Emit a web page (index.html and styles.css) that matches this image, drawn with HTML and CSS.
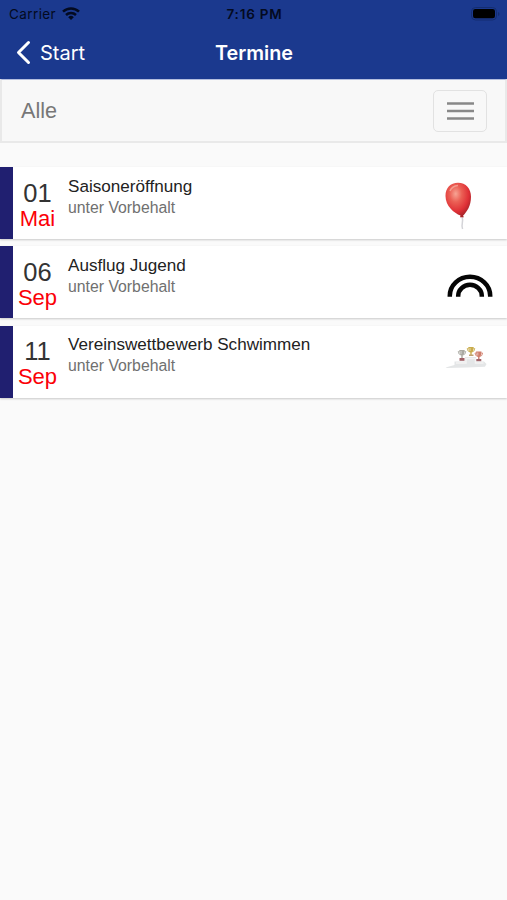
FILE: index.html
```html
<!DOCTYPE html>
<html lang="de">
<head>
    <meta charset="UTF-8">
    <meta name="viewport" content="width=device-width, initial-scale=1.0">
    <title>Termine</title>
    <link rel="stylesheet" href="styles.css">
</head>
<body>

<header>
    <div class="status-bar">
        <div class="carrier">
            <span>Carrier</span>
            <svg width="18" height="14" viewBox="0 0 18 14" fill="none" stroke="#030a20" stroke-width="2.5">
                <path d="M1 4.700a11.500 11.500 0 0 1 16 0"/>
                <path d="M4 8a7.300 7.300 0 0 1 10 0"/>
                <path d="M6.200 10.200a4 4 0 0 1 5.600 0L9 13z" fill="#030a20" stroke="none"/>
            </svg>
        </div>
        <span class="time">7:16 PM</span>
        <svg class="battery" width="29" height="14" viewBox="0 0 29 14">
            <rect x="0.5" y="0.5" width="25" height="12.5" rx="4" fill="none" stroke="#142d70"/>
            <rect x="2" y="2" width="22" height="9.3" rx="2.3" fill="#000"/>
            <path d="M27 5v4q1.500-.5 1.500-2T27 5z" fill="#142d70"/>
        </svg>
    </div>
    <nav class="nav-bar">
        <a class="back">
            <svg width="16" height="26" viewBox="0 0 16 26" fill="none" stroke="#fff" stroke-width="3" stroke-linecap="round" stroke-linejoin="round">
                <path d="M13.500 2.500L3.500 12.500l10 10"/>
            </svg>
            <span>Start</span>
        </a>
        <h1>Termine</h1>
    </nav>
</header>

<div class="filter">
    <span class="filter-name">Alle</span>
    <button class="menu-button" aria-label="Menü">
        <svg width="27" height="18" viewBox="0 0 27 18" stroke="#888" stroke-width="2.5">
            <path d="M0 1.600h27M0 9h27M0 16.400h27"/>
        </svg>
    </button>
</div>

<main class="list">
    <div class="card">
        <div class="date">
            <span class="day">01</span>
            <span class="month">Mai</span>
        </div>
        <div class="text">
            <h2>Saisoneröffnung</h2>
            <p>unter Vorbehalt</p>
        </div>
        <svg class="picture" viewBox="0 0 77 72">
            <defs>
                <radialGradient id="balloon" cx="0.4" cy="0.32" r="0.68">
                    <stop offset="0" stop-color="#f7a494"/>
                    <stop offset="0.35" stop-color="#eb6055"/>
                    <stop offset="0.75" stop-color="#df3036"/>
                    <stop offset="1" stop-color="#a9252a"/>
                </radialGradient>
            </defs>
            <path d="M32 49q1 4 .3 7t.3 6" fill="none" stroke="#d4d4d8" stroke-width="1.5"/>
            <path d="M28 15.800c8 0 13 6 13 14 0 9-4 15-8 19l1 1.500h-4l.5-1.700C24 46 15.500 39 15.500 29c0-8 5-13.200 12.500-13.200z" fill="url(#balloon)"/>
            <path d="M20 24q2-5 8-5.500" fill="none" stroke="#f9c3b4" stroke-width="1.5" opacity=".6"/>
        </svg>
    </div>

    <div class="card">
        <div class="date">
            <span class="day">06</span>
            <span class="month">Sep</span>
        </div>
        <div class="text">
            <h2>Ausflug Jugend</h2>
            <p>unter Vorbehalt</p>
        </div>
        <svg class="picture" viewBox="0 0 77 72" fill="none" stroke="#050505" stroke-width="4.500">
            <path d="M19.800 50.800v-1a20.200 19 0 0 1 40.400 0v1"/>
            <path d="M28.200 50.800v-1a11.800 11 0 0 1 23.600 0v1"/>
        </svg>
    </div>

    <div class="card">
        <div class="date">
            <span class="day">11</span>
            <span class="month">Sep</span>
        </div>
        <div class="text">
            <h2>Vereinswettbewerb Schwimmen</h2>
            <p>unter Vorbehalt</p>
        </div>
        <svg class="picture" viewBox="0 0 77 72">
            <defs>
                <g id="cup">
                    <path d="M-2.600 1.500h-1.200q0 3 2.800 3.500M2.600 1.500h1.200q0 3-2.800 3.500" fill="none" stroke="currentColor" stroke-width=".8"/>
                    <path d="M-2.700 0h5.400q0 4.500-2 5.500v2.500h-1.400V5.500q-2-1-2-5.500z" fill="currentColor"/>
                    <path d="M-1 1v3" stroke="#fff" stroke-width=".9" opacity=".6"/>
                </g>
            </defs>
            <path d="M15.500 41.500l9-2.500v-3.500h10.500V31h11v4.500h8l2.500 2.500-1.500 2.800-18 .7-20 .5z" fill="#e4e6e7"/>
            <path d="M26 37h10v-4.500h9.500V37h8" fill="none" stroke="#f3f4f4" stroke-width="1.5"/>
            <use href="#cup" x="32" y="24" color="#aaa9a2"/>
            <path d="M29.500 32h5v2.800h-5z" fill="#a06167"/>
            <use href="#cup" x="41" y="21" color="#c9ac4b"/>
            <path d="M39 28.500h4.500V30H39z" fill="#bda071"/>
            <use href="#cup" x="48.800" y="25.500" color="#cf7c6a"/>
            <path d="M46.300 33h5v2.200h-5z" fill="#a1656a"/>
        </svg>
    </div>
</main>

</body>
</html>
```

FILE: styles.css
```css
* {
    box-sizing: border-box;
}
body {
    margin: 0;
    min-height: 100vh;
    background: #fafafa;
    font-family: "Liberation Sans", Arial, sans-serif;
}
h1, h2, p {
    margin: 0;
    font-weight: normal;
}
header {
    height: 79px;
    background: #1b398e;
    font-family: Inter, sans-serif;
}
.status-bar {
    display: grid;
    grid-template-columns: 1fr auto 1fr;
    align-items: center;
    height: 27px;
    padding: 0 7px 0 9px;
    font-size: 13.5px;
    color: #030a20;
}
.carrier {
    display: flex;
    align-items: center;
    gap: 6px;
    letter-spacing: 0.4px;
}
.time {
    font-weight: 600;
    letter-spacing: 0.8px;
}
.battery {
    justify-self: end;
}
.nav-bar {
    display: grid;
    grid-template-columns: 1fr auto 1fr;
    align-items: center;
    height: 51px;
    padding: 0 14px 0 15px;
    color: #fff;
}
.back {
    display: flex;
    align-items: center;
    gap: 9px;
    font-size: 20px;
}
h1 {
    font-size: 19.8px;
    font-weight: 600;
}
.filter {
    display: flex;
    justify-content: space-between;
    align-items: center;
    height: 64px;
    padding: 0 18px 0 19px;
    background: #f8f8f8;
    border: 2px solid #e9e9e9;
    border-top: 1px solid #b4bede;
}
.filter-name {
    font-size: 21.6px;
    color: #777;
}
.menu-button {
    display: flex;
    align-items: center;
    justify-content: center;
    width: 54px;
    height: 42px;
    padding: 0;
    background: none;
    border: 1.5px solid #e2e2e2;
    border-radius: 5px;
}
.list {
    display: flex;
    flex-direction: column;
    gap: 7.3px;
    padding-top: 24px;
}
.card {
    display: flex;
    height: 72px;
    background: #fff;
    border-left: 13px solid #201f70;
    box-shadow: 0 1px 2px rgba(0, 0, 0, 0.2);
}
.date {
    display: flex;
    flex-direction: column;
    align-items: center;
    width: 49px;
    padding-top: 12.5px;
    line-height: 26px;
}
.day {
    font-size: 25.5px;
    color: #333;
}
.month {
    font-size: 22px;
    color: #fb0007;
}
.text {
    flex: 1;
    padding: 8.7px 0 0 6px;
    line-height: 21px;
}
h2 {
    font-size: 17.1px;
    color: #222;
}
p {
    font-size: 15.8px;
    color: #707070;
}
.picture {
    width: 77px;
    height: 72px;
}
```
